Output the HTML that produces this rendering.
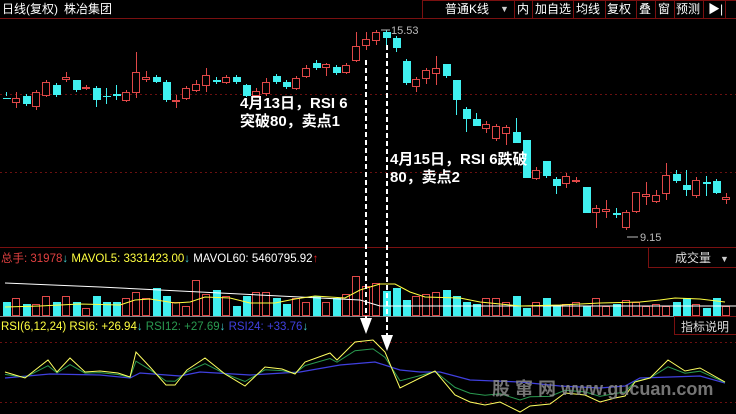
<!DOCTYPE html>
<html><head><meta charset="utf-8"><style>
html,body{margin:0;padding:0;background:#000;width:736px;height:414px;overflow:hidden;font-family:"Liberation Sans","Noto Sans CJK SC",sans-serif}
svg{display:block}
</style></head><body>
<svg id="s" width="736" height="414" xmlns="http://www.w3.org/2000/svg" font-family="Liberation Sans, Noto Sans CJK SC, sans-serif">
<rect width="736" height="414" fill="#000"/>
<line x1="0" y1="18.5" x2="736" y2="18.5" stroke="#7a1010"/>
<rect x="422.5" y="0.5" width="314" height="18" fill="none" stroke="#7a1010"/>
<text x="2" y="13" fill="#fff" font-size="12">日线(复权)</text>
<text x="64" y="13" fill="#fff" font-size="12">株冶集团</text>
<text x="445" y="13" fill="#fff" font-size="12">普通K线</text>
<text x="500" y="12" fill="#ccc" font-size="9">▼</text>
<g stroke="#7a1010"><line x1="514.5" y1="0" x2="514.5" y2="19"/><line x1="532.5" y1="0" x2="532.5" y2="19"/><line x1="573.5" y1="0" x2="573.5" y2="19"/><line x1="605.5" y1="0" x2="605.5" y2="19"/><line x1="636.5" y1="0" x2="636.5" y2="19"/><line x1="655.5" y1="0" x2="655.5" y2="19"/><line x1="674.5" y1="0" x2="674.5" y2="19"/><line x1="703.5" y1="0" x2="703.5" y2="19"/><line x1="725.5" y1="0" x2="725.5" y2="19"/></g>
<g fill="#fff" font-size="12"><text x="517" y="13">内</text><text x="535" y="13">加自选</text><text x="576" y="13">均线</text><text x="607" y="13">复权</text><text x="639" y="13">叠</text><text x="658" y="13">窗</text><text x="676" y="13">预测</text><text x="708" y="13">▶|</text></g>
<g stroke="#6a1010" stroke-dasharray="2,3"><line x1="0" y1="94.5" x2="736" y2="94.5"/><line x1="0" y1="172.5" x2="736" y2="172.5"/><line x1="0" y1="342.5" x2="736" y2="342.5"/><line x1="0" y1="402.5" x2="736" y2="402.5"/></g>
<line x1="0" y1="247.5" x2="736" y2="247.5" stroke="#7a1010"/>
<line x1="0" y1="316.5" x2="736" y2="316.5" stroke="#888"/>
<rect x="648.5" y="247.5" width="88" height="20" fill="none" stroke="#7a1010"/>
<text x="675" y="262" fill="#ddd" font-size="12">成交量</text><text x="720" y="262" fill="#ccc" font-size="9">▼</text>
<rect x="674.5" y="316.5" width="62" height="18" fill="none" stroke="#7a1010"/>
<text x="681" y="331" fill="#ddd" font-size="12">指标说明</text>
<text x="1" y="262" font-size="11.5"><tspan fill="#e04040">总手: 31978</tspan><tspan fill="#4cc">↓</tspan><tspan fill="#ffff40"> MAVOL5: 3331423.00</tspan><tspan fill="#4cc">↓</tspan><tspan fill="#fff"> MAVOL60: 5460795.92</tspan><tspan fill="#e02020">↑</tspan></text>
<text x="1" y="330" font-size="11.5"><tspan fill="#ffff40">RSI(6,12,24) RSI6: +26.94</tspan><tspan fill="#4cc">↓</tspan><tspan fill="#2a9a50"> RSI12: +27.69</tspan><tspan fill="#4cc">↓</tspan><tspan fill="#4040e0"> RSI24: +33.76</tspan><tspan fill="#4cc">↓</tspan></text>
<g id="c"></g>
<text x="391" y="34" fill="#bbb" font-size="11">15.53</text><line x1="381" y1="30" x2="390" y2="30" stroke="#bbb"/>
<text x="640" y="241" fill="#bbb" font-size="11">9.15</text><line x1="627" y1="237" x2="638" y2="237" stroke="#bbb"/>
<text x="492" y="395" fill="#8a8a8a" font-size="18" font-weight="bold" opacity="0.85">股 窜 网 www.gucuan.com</text>
<g stroke="#fff" stroke-width="2" stroke-dasharray="5,3"><line x1="366" y1="60" x2="366" y2="322"/><line x1="387" y1="45" x2="387" y2="340"/></g>
<polygon points="360,318 372,318 366,334" fill="#fff"/><polygon points="381,335 393,335 387,351" fill="#fff"/>
<g fill="#fff" font-size="15" font-weight="bold"><text x="240" y="108">4月13日，RSI 6</text><text x="240" y="126">突破80，卖点1</text><text x="390" y="164">4月15日，RSI 6跌破</text><text x="390" y="182">80，卖点2</text></g>
</svg>
<script>
var R='#e04848',C='#40f0f0';
var d=[[98,98,92,96,0],[98,102,92,108,1],[96,104,94,106,0],[92,106,90,110,1],[82,95,80,97,1],[85,95,83,97,0],[77,79,72,82,1],[80,90,80,92,0],[87,88,85,90,1],[88,100,86,107,0],[96,97,88,104,0],[94,96,85,100,0],[92,100,90,102,1],[72,92,52,98,1],[77,79,71,82,1],[77,82,75,83,0],[82,100,80,102,0],[100,101,95,108,1],[88,98,86,100,1],[84,90,80,92,1],[75,85,68,92,1],[80,82,77,84,0],[77,82,75,84,1],[77,82,75,84,0],[85,96,84,97,0],[91,95,88,97,1],[82,93,78,96,1],[76,82,74,84,0],[82,87,80,89,0],[78,88,76,90,1],[68,76,65,78,1],[63,68,60,70,0],[64,67,63,76,1],[67,73,65,75,0],[65,72,63,74,1],[46,60,32,62,1],[39,45,32,50,1],[32,40,30,45,1],[32,38,30,45,0],[38,48,36,52,0],[61,83,59,85,0],[79,86,77,92,1],[70,78,68,84,1],[68,73,56,85,1],[64,76,64,78,0],[80,100,80,115,0],[109,119,107,132,0],[119,126,113,126,0],[124,128,121,133,1],[126,138,124,141,1],[127,133,125,145,1],[132,143,118,143,0],[140,178,140,178,0],[170,178,167,180,1],[161,176,161,178,0],[179,186,177,194,0],[176,183,173,188,1],[180,181,177,183,1],[187,213,187,213,0],[208,212,205,228,1],[209,211,200,218,1],[213,215,208,218,0],[212,227,210,230,1],[192,211,192,213,1],[194,196,182,205,1],[195,201,190,203,1],[175,193,163,200,1],[174,181,170,183,0],[185,190,170,196,0],[180,195,177,198,1],[182,184,176,196,0],[181,193,179,194,0],[197,199,193,204,1]];
var vh=[14,18,12,12,20,14,20,14,8,20,14,14,18,24,18,28,20,14,10,36,22,26,20,10,20,24,24,18,12,18,14,20,14,18,22,40,30,33,25,28,16,20,22,24,26,20,14,12,18,18,14,20,8,14,18,10,12,14,10,18,10,12,16,14,10,12,10,14,18,12,8,18,10];
var s='';
d.forEach(function(c,i){var x=6+i*10,col=c[4]?R:C;
s+='<line x1="'+(x+.5)+'" y1="'+c[2]+'" x2="'+(x+.5)+'" y2="'+c[3]+'" stroke="'+col+'"/>';
var h=Math.max(1,c[1]-c[0]);
if(c[4])s+='<rect x="'+(x-3.5)+'" y="'+(c[0]+.5)+'" width="7" height="'+h+'" fill="#000" stroke="'+col+'"/>';
else s+='<rect x="'+(x-3)+'" y="'+c[0]+'" width="8" height="'+h+'" fill="'+col+'"/>';
var v=vh[i]||12,y=316-v;
if(c[4])s+='<rect x="'+(x-3.5)+'" y="'+(y+.5)+'" width="7" height="'+(v-1)+'" fill="none" stroke="'+R+'"/>';
else s+='<rect x="'+(x-3)+'" y="'+y+'" width="8" height="'+v+'" fill="'+C+'"/>';});
s+='<polyline fill="none" stroke="#fff" points="5,283 100,287 200,292 300,297 360,300 380,306 736,306"/>';
s+='<polyline fill="none" stroke="#ffff40" points="5,307 40,306 80,304 120,305 135,300 150,299 175,303 190,302 205,297 230,298 250,303 275,303 295,299 315,296 345,298 360,290 380,284 395,284 410,292 425,297 460,298 480,302 520,306 560,305 600,303 640,302 660,300 675,298 700,299 725,302"/>';
var Y=[[5,372],[25,378],[48,360],[57,372],[70,358],[85,372],[100,371],[118,373],[130,377],[136,352],[150,367],[166,385],[175,385],[187,370],[205,358],[225,374],[245,386],[265,367],[282,369],[295,374],[305,362],[330,353],[337,360],[355,342],[373,340],[385,352],[400,388],[420,378],[435,371],[455,395],[470,402],[485,405],[500,402],[520,412],[530,406],[550,404],[565,393],[585,395],[600,402],[615,398],[625,396],[635,382],[650,378],[668,360],[685,371],[700,368],[725,382]];
var B=[[5,378],[50,374],[100,375],[130,378],[140,373],[180,376],[200,372],[250,375],[300,372],[340,365],[375,362],[400,370],[420,372],[440,372],[470,380],[520,382],[560,386],[600,388],[625,386],[640,378],[700,376],[725,383]];
function by(x){for(var i=0;i<B.length-1;i++)if(x<=B[i+1][0])return B[i][1]+(B[i+1][1]-B[i][1])*(x-B[i][0])/(B[i+1][0]-B[i][0]);return B[B.length-1][1];}
var g=Y.map(function(p){var b=by(p[0]);return p[0]+','+(b+(p[1]-b)*0.6).toFixed(1);}).join(' ');
s+='<polyline fill="none" stroke="#4040e0" stroke-width="1.2" points="'+B.map(function(p){return p.join(',')}).join(' ')+'"/>';
s+='<polyline fill="none" stroke="#2a9a50" points="'+g+'"/>';
s+='<polyline fill="none" stroke="#ffff60" points="'+Y.map(function(p){return p.join(',')}).join(' ')+'"/>';
document.getElementById('c').innerHTML=s;
</script>
</body></html>
